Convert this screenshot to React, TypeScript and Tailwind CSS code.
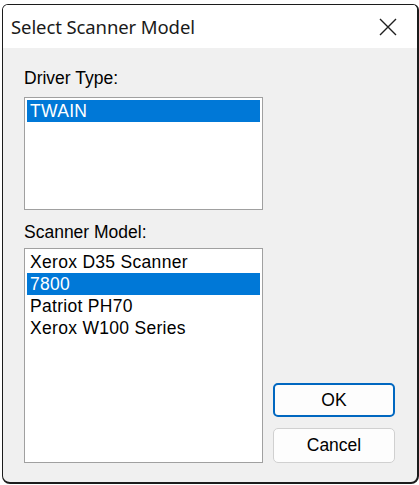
import React from "react";

const driverTypes = ["TWAIN"];
const scannerModels = ["Xerox D35 Scanner", "7800", "Patriot PH70", "Xerox W100 Series"];

const uiFont = { fontFamily: '"Liberation Sans", Arial, sans-serif' };

function ListBox({ items, selected, height }: { items: string[]; selected: number; height: string }) {
  return (
    <div className={`w-[239px] ${height} border border-[#a0a0a0] bg-white p-[2px]`}>
      {items.map((item, i) => (
        <div
          key={item}
          className={`h-[22px] pl-[3px] text-[17.5px] leading-[22px] tracking-[0.3px] whitespace-nowrap ${
            i === selected ? "bg-[#0078d7] text-white" : "text-black"
          }`}
        >
          {item}
        </div>
      ))}
    </div>
  );
}

export default function App() {
  return (
    <div className="w-[419px] h-[485px] bg-white pt-[4px] pl-[2px]" style={uiFont}>
      <div className="w-[417px] h-[480px] flex flex-col overflow-hidden rounded-t-[6px] rounded-b-[8px] border-t border-l border-r-2 border-b-2 border-[#1c1c1c] bg-[#f0f0f0]">
        <div className="h-[43px] shrink-0 bg-white flex items-center justify-between pl-[8px] pr-[20px]">
          <span
            className="text-[18.5px] text-[#1a1a1a] tracking-[-0.1px] mt-[1px]"
            style={{ fontFamily: '"Noto Sans", "Open Sans", sans-serif' }}
          >
            Select Scanner Model
          </span>
          <svg width="18" height="18" viewBox="0 0 18 18" className="mt-[1px]">
            <path d="M1 1 L17 17 M17 1 L1 17" stroke="#1f1f1f" strokeWidth="1.4" fill="none" />
          </svg>
        </div>

        <div className="flex flex-1 pl-[21px] pr-[22px] pt-[20px] pb-[18px] justify-between">
          <div className="flex flex-col">
            <div className="text-[17.5px] leading-[20px] text-black">Driver Type:</div>
            <div className="mt-[9px]">
              <ListBox items={driverTypes} selected={0} height="h-[113px]" />
            </div>
            <div className="mt-[12px] text-[17.5px] leading-[20px] text-black">Scanner Model:</div>
            <div className="mt-[6px]">
              <ListBox items={scannerModels} selected={1} height="h-[215px]" />
            </div>
          </div>

          <div className="flex flex-col justify-end gap-[11px] pb-[1px]">
            <button className="w-[122px] h-[34px] rounded-[5px] border-2 border-[#0067c0] bg-[#fdfdfd] text-[17.5px] text-black">
              OK
            </button>
            <button className="w-[122px] h-[35px] rounded-[5px] border border-[#d0d0d0] bg-[#fdfdfd] text-[17.5px] text-black">
              Cancel
            </button>
          </div>
        </div>
      </div>
    </div>
  );
}
